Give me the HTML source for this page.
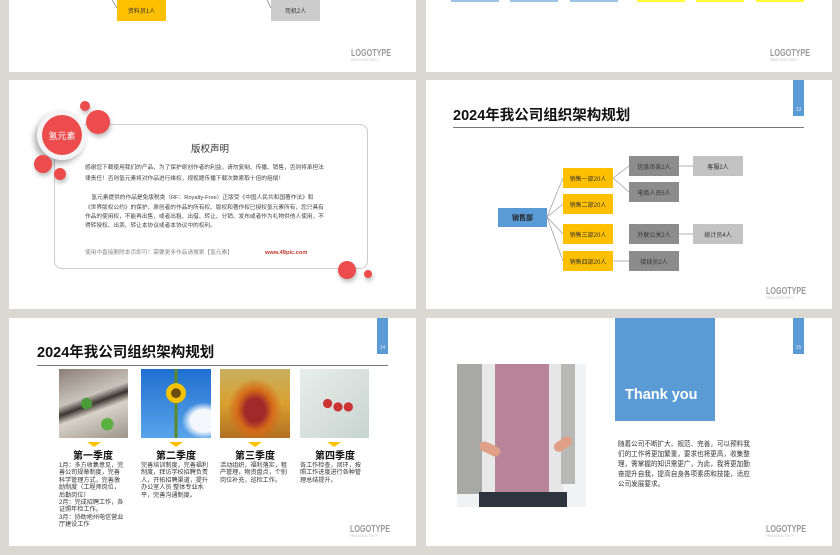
<!DOCTYPE html>
<html><head><meta charset="utf-8"><style>
*{margin:0;padding:0;box-sizing:border-box}
body{width:840px;height:555px;background:#dbd7d2;position:relative;overflow:hidden;font-family:"Liberation Sans","Noto Sans CJK SC",sans-serif;color:#333}
.a{position:absolute}
.s{position:absolute;background:#fff}
.logo{position:absolute;font-family:"Liberation Sans",sans-serif;font-weight:bold;color:#999;font-size:10px;transform:scaleX(.72);transform-origin:left;line-height:9px}
.logo small{display:block;font-size:3.5px;font-weight:normal;line-height:5px;color:#bbb;transform:scaleX(1.2);transform-origin:left}
.tab{position:absolute;width:11px;height:36px;background:#5b9bd5;color:#dde;font-size:5px;text-align:center;padding-top:27px}
.title{position:absolute;font-size:14.5px;font-weight:bold;color:#111;white-space:nowrap}
.hl{position:absolute;height:1px;background:#777}
.b{position:absolute;font-size:6px;display:flex;align-items:center;justify-content:center;color:#333}
.y{background:#ffc000}.g{background:#8c8c8c}.lg{background:#c3c3c3}
.c{position:absolute;border-radius:50%;background:#ec4c4c;box-shadow:1px 3px 4px rgba(0,0,0,.25)}
.t{position:absolute;font-size:5.7px;line-height:9.5px;color:#444;white-space:nowrap}
.q{position:absolute;font-size:10px;font-weight:bold;color:#111;text-align:center;width:70px}
.qt{position:absolute;font-size:6.1px;line-height:7.4px;color:#333;width:70px}
.tri{position:absolute;width:0;height:0;border-left:7px solid transparent;border-right:7px solid transparent;border-top:5px solid #ffc000}
</style></head><body>

<!-- top row -->
<div class="s" style="left:9px;top:0;width:407px;height:72px"></div>
<svg class="a" style="left:9px;top:0" width="407" height="72"><line x1="103" y1="0" x2="108" y2="8" stroke="#666" stroke-width=".6"/><line x1="258" y1="0" x2="262" y2="8" stroke="#666" stroke-width=".6"/></svg>
<div class="b y" style="left:117px;top:0;width:49px;height:21px">资料员1人</div>
<div class="b lg" style="left:271px;top:0;width:49px;height:21px;background:#ccc">司机2人</div>
<div class="logo" style="left:351px;top:49px">LOGOTYPE<small>FIELD OF ACTIVITY</small></div>

<div class="s" style="left:426px;top:0;width:406px;height:72px"></div>
<div class="a" style="left:451px;top:0;width:48px;height:2px;background:#9dc3e6"></div>
<div class="a" style="left:510px;top:0;width:48px;height:2px;background:#9dc3e6"></div>
<div class="a" style="left:570px;top:0;width:48px;height:2px;background:#9dc3e6"></div>
<div class="a" style="left:637px;top:0;width:48px;height:2px;background:#ffff33"></div>
<div class="a" style="left:696px;top:0;width:48px;height:2px;background:#ffff33"></div>
<div class="a" style="left:756px;top:0;width:48px;height:2px;background:#ffff33"></div>
<div class="logo" style="left:770px;top:49px">LOGOTYPE<small>FIELD OF ACTIVITY</small></div>

<!-- copyright slide -->
<div class="s" style="left:9px;top:80px;width:407px;height:229px"></div>
<div class="a" style="left:54px;top:124px;width:314px;height:145px;border:1px solid #ccc;border-radius:8px;background:#fff"></div>
<div class="a" style="left:170px;top:141px;width:80px;text-align:center;font-size:9.5px;color:#333">版权声明</div>
<div class="t" style="left:85px;top:164px">感谢您下载使用我们的产品，为了保护原创作者的利益，请勿复制、传播、销售，否则将承担法</div>
<div class="t" style="left:85px;top:175px">律责任！否则氢元素将对作品进行维权，视视题传播下载次数索取十倍的赔偿！</div>
<div class="t" style="left:85px;top:194px">&nbsp;&nbsp;&nbsp;&nbsp;氢元素提供的作品是免版税类（RF：Royalty-Free）正版受《中国人民共和国著作法》和</div>
<div class="t" style="left:85px;top:204px">《世界版权公约》的保护，原创者的作品的所有权、版权和著作权已授权氢元素所有，您只具有</div>
<div class="t" style="left:85px;top:213px">作品的使用权，不能再出售，或者出租、出借、转让、分销、发布或者作为礼物供他人使用，不</div>
<div class="t" style="left:85px;top:222px">得转授权、出卖、转让本协议或者本协议中的权利。</div>
<div class="t" style="left:85px;top:249px;color:#888">使用中直接删除本页即可！需要更多作品请搜索【氢元素】</div>
<div class="t" style="left:265px;top:249px;color:#c0392b;font-weight:bold">www.49pic.com</div>
<div class="a" style="left:37px;top:110px;width:50px;height:50px;border-radius:50%;background:#f4f4f4;box-shadow:-3px 4px 6px rgba(0,0,0,.3)"></div>
<div class="c" style="left:42px;top:115px;width:40px;height:40px;box-shadow:none;color:#fff;font-size:9px;display:flex;align-items:center;justify-content:center">氢元素</div>
<div class="c" style="left:80px;top:101px;width:10px;height:10px"></div>
<div class="c" style="left:86px;top:110px;width:24px;height:24px"></div>
<div class="c" style="left:34px;top:155px;width:18px;height:18px"></div>
<div class="c" style="left:54px;top:168px;width:12px;height:12px"></div>
<div class="c" style="left:338px;top:261px;width:18px;height:18px"></div>
<div class="c" style="left:364px;top:270px;width:8px;height:8px"></div>

<!-- slide 33 -->
<div class="s" style="left:426px;top:80px;width:406px;height:229px"></div>
<div class="tab" style="left:793px;top:80px">33</div>
<div class="title" style="left:453px;top:104px">2024年我公司组织架构规划</div>
<div class="hl" style="left:453px;top:127px;width:351px"></div>
<svg class="a" style="left:426px;top:80px" width="406" height="229" stroke="#999" stroke-width=".7" fill="none">
<path d="M121 137 L137 98 M121 137 L137 124 M121 137 L137 154 M121 137 L137 181"/>
<path d="M187 98 L203 86 M187 98 L203 112 M187 181 L203 181 M253 86 L267 86 M253 154 L267 154"/>
</svg>
<div class="b" style="left:498px;top:208px;width:49px;height:19px;background:#5b9bd5;font-size:7px;font-weight:bold;color:#222">销售部</div>
<div class="b y" style="left:563px;top:168px;width:50px;height:20px">销售一部20人</div>
<div class="b y" style="left:563px;top:194px;width:50px;height:20px">销售二部20人</div>
<div class="b y" style="left:563px;top:224px;width:50px;height:20px">销售三部20人</div>
<div class="b y" style="left:563px;top:251px;width:50px;height:20px">销售四部20人</div>
<div class="b g" style="left:629px;top:156px;width:50px;height:20px">信息员各2人</div>
<div class="b g" style="left:629px;top:182px;width:50px;height:20px">电商人员5人</div>
<div class="b g" style="left:629px;top:224px;width:50px;height:20px">外联公关2人</div>
<div class="b g" style="left:629px;top:251px;width:50px;height:20px">接线员2人</div>
<div class="b lg" style="left:693px;top:156px;width:50px;height:20px">客服2人</div>
<div class="b lg" style="left:693px;top:224px;width:50px;height:20px">统计员4人</div>
<div class="logo" style="left:766px;top:287px">LOGOTYPE<small>FIELD OF ACTIVITY</small></div>

<!-- slide 34 -->
<div class="s" style="left:9px;top:318px;width:407px;height:228px"></div>
<div class="tab" style="left:377px;top:318px">34</div>
<div class="title" style="left:37px;top:341px">2024年我公司组织架构规划</div>
<div class="hl" style="left:37px;top:365px;width:351px"></div>
<div class="a" style="left:59px;top:369px;width:69px;height:69px;background:radial-gradient(circle at 40% 50%,#4a9a3a 0 10%,transparent 11%),radial-gradient(circle at 70% 80%,#5ab040 0 8%,transparent 9%),linear-gradient(160deg,#8a7f78,#c9c3bb 40%,#3b3530 50%,#d8d2c8 60%,#9c948b)"></div>
<div class="a" style="left:141px;top:369px;width:70px;height:69px;background:radial-gradient(circle at 50% 35%,#6a4a10 0 8%,#f2c200 9% 17%,transparent 18%),linear-gradient(90deg,transparent 48%,#5a8a2a 48% 52%,transparent 52%),radial-gradient(ellipse at 90% 75%,#f4f8fc 0 15%,transparent 25%),linear-gradient(#1f6fd0,#5aa4ea)"></div>
<div class="a" style="left:220px;top:369px;width:70px;height:69px;background:radial-gradient(ellipse at 50% 60%,#a02a2a 0 20%,#d46a1a 35%,transparent 55%),linear-gradient(#c8b060,#d9a030 50%,#b07020)"></div>
<div class="a" style="left:300px;top:369px;width:69px;height:69px;background:radial-gradient(circle at 40% 50%,#c33 0 8%,transparent 9%),radial-gradient(circle at 55% 55%,#c33 0 8%,transparent 9%),radial-gradient(circle at 70% 55%,#c33 0 7%,transparent 8%),linear-gradient(135deg,#e8eeec,#c8d4d0)"></div>
<div class="tri" style="left:87px;top:442px"></div>
<div class="tri" style="left:169px;top:442px"></div>
<div class="tri" style="left:248px;top:442px"></div>
<div class="tri" style="left:327px;top:442px"></div>
<div class="q" style="left:58px;top:447px">第一季度</div>
<div class="q" style="left:141px;top:447px">第二季度</div>
<div class="q" style="left:220px;top:447px">第三季度</div>
<div class="q" style="left:300px;top:447px">第四季度</div>
<div class="qt" style="left:59px;top:462px;width:66px">1月：多方收集意见，完善公司规章制度，完善科学管理方式，完善激励制度（工程师岗位，后勤岗位）<br>2月：完成招聘工作，各证照年检工作。<br>3月：协助地州电信营业厅建设工作</div>
<div class="qt" style="left:141px;top:462px;width:68px">完善培训制度，完善福利制度，拜访学校招聘负责人，开拓招聘渠道，提升办公室人员 整体专业水平，完善沟通制度。</div>
<div class="qt" style="left:220px;top:462px;width:68px">活动组织，福利落实，租产管理，物资盘点，个别岗位补充，巡检工作。</div>
<div class="qt" style="left:300px;top:462px;width:66px">各工作检查，闭环，按照工作进度进行各种管理总结提升。</div>
<div class="logo" style="left:350px;top:525px">LOGOTYPE<small>FIELD OF ACTIVITY</small></div>

<!-- slide 35 -->
<div class="s" style="left:426px;top:318px;width:406px;height:228px"></div>
<div class="tab" style="left:793px;top:318px">35</div>
<div class="a" style="left:615px;top:318px;width:100px;height:103px;background:#5b9bd5"></div>
<div class="a" style="left:625px;top:387px;font-size:14.5px;font-weight:bold;color:#fff;white-space:nowrap">Thank you</div>
<div class="a" style="left:457px;top:364px;width:129px;height:143px;background:#f1f2f4;overflow:hidden">
  <div class="a" style="left:0;top:0;width:30px;height:130px;background:#a8a8a6"></div>
  <div class="a" style="left:25px;top:0;width:14px;height:130px;background:#e8e8e8"></div>
  <div class="a" style="left:90px;top:0;width:16px;height:130px;background:#e6e6e6"></div>
  <div class="a" style="left:104px;top:0;width:14px;height:120px;background:#b8b8b6"></div>
  <div class="a" style="left:38px;top:0;width:54px;height:128px;background:#b7849a"></div>
  <div class="a" style="left:22px;top:128px;width:88px;height:16px;background:#2d3440"></div>
  <div class="a" style="left:22px;top:80px;width:22px;height:10px;background:#e0a088;border-radius:5px;transform:rotate(25deg)"></div>
  <div class="a" style="left:96px;top:75px;width:20px;height:10px;background:#e0a088;border-radius:5px;transform:rotate(-35deg)"></div>
</div>
<div class="a" style="left:618px;top:440px;font-size:6.6px;line-height:10px;color:#333;width:133px">随着公司不断扩大、规范、完善，可以预料我们的工作将更加繁重，要求也将更高，收集整理，需掌握的知识需更广，为此，我将更加勤奋提升自我，提高自身各项素质和技能，适应公司发展要求。</div>
<div class="logo" style="left:766px;top:525px">LOGOTYPE<small>FIELD OF ACTIVITY</small></div>
</body></html>
